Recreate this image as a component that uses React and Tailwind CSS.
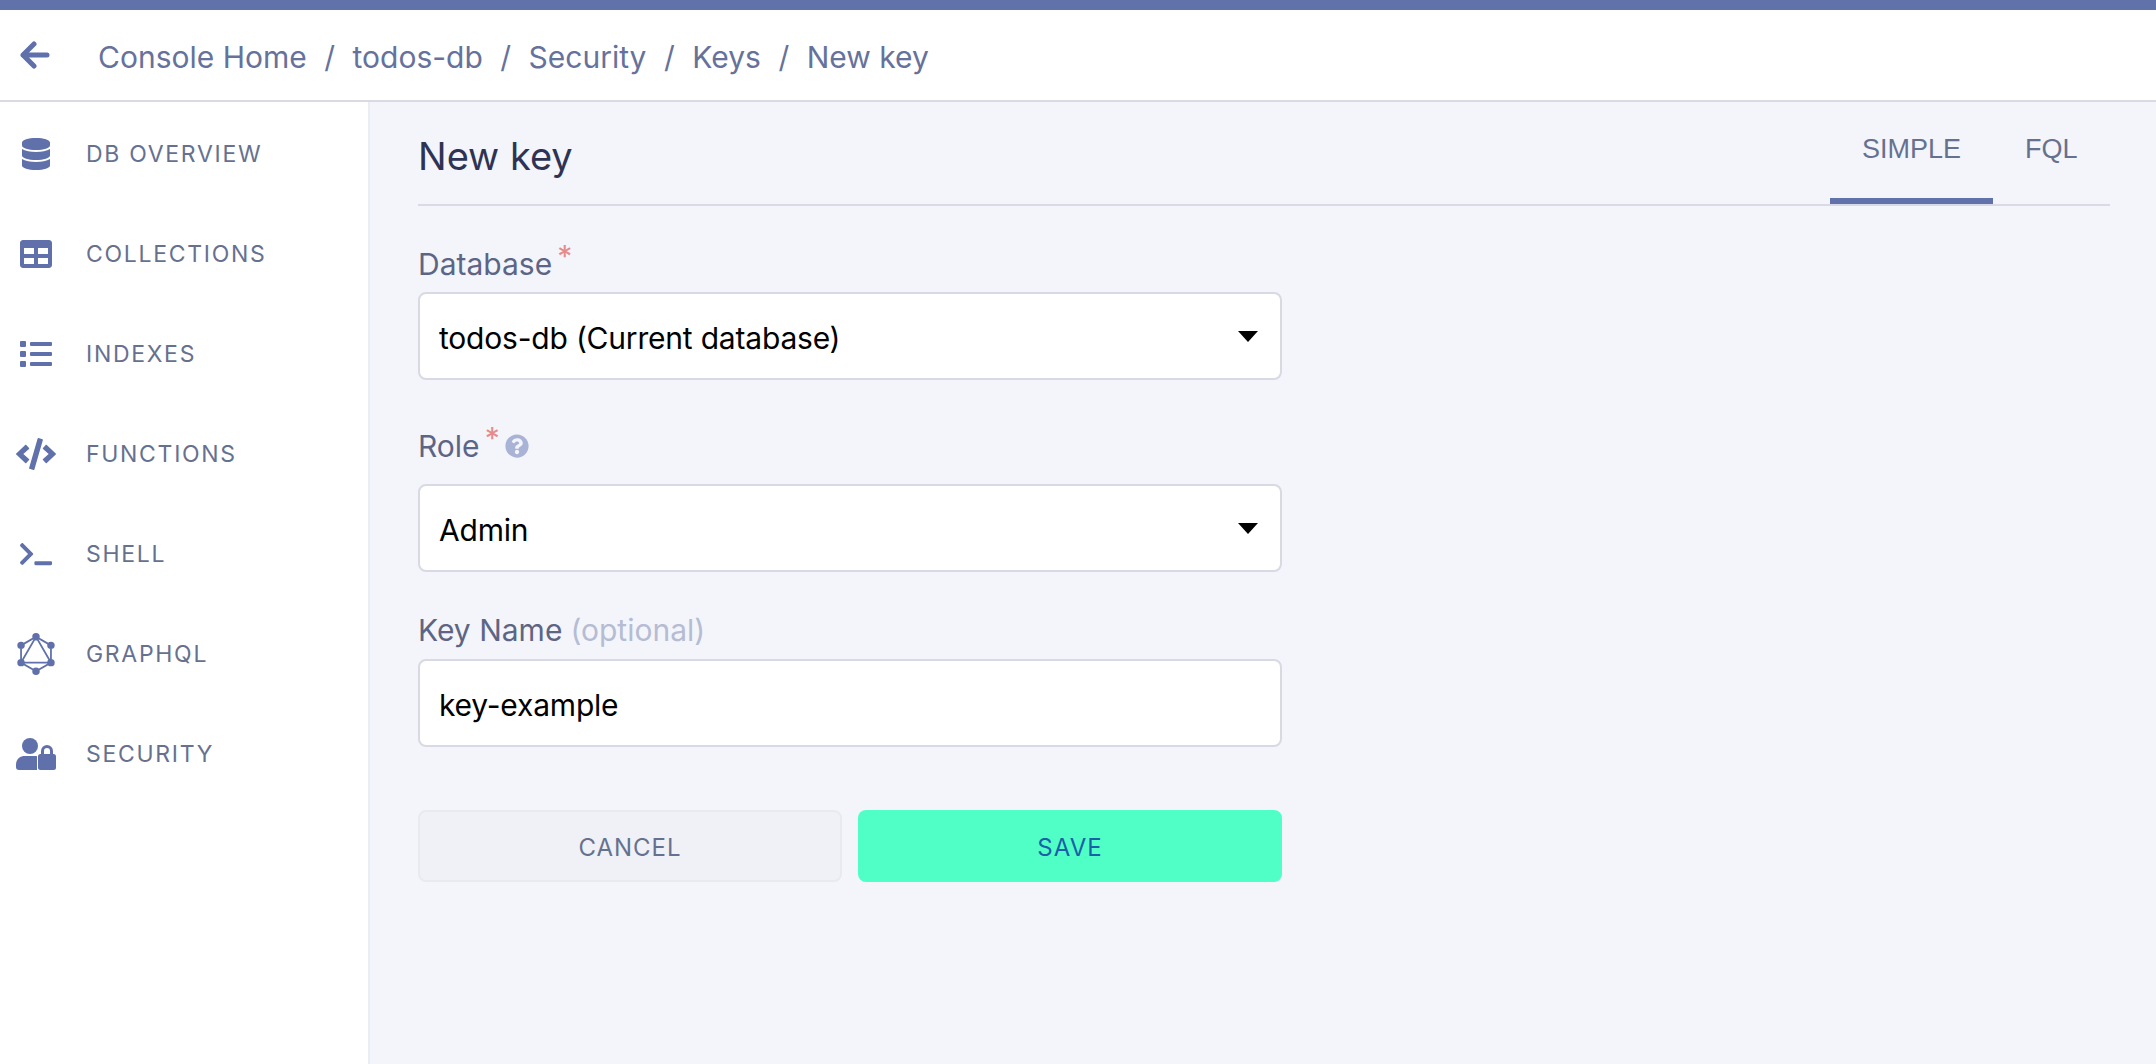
import React from "react";
import { FaDatabase, FaTable, FaList, FaCode, FaTerminal, FaQuestionCircle } from "react-icons/fa";
import { SiGraphql } from "react-icons/si";

function BackArrow() {
  return (
    <svg width="30" height="28" viewBox="0 0 30 28" fill="none" stroke="#5f70ab" strokeWidth="5" strokeLinecap="round" strokeLinejoin="round">
      <path d="M3 14H27M14 3L3 14L14 25" />
    </svg>
  );
}

function SecurityIcon() {
  return (
    <svg width="40" height="32" viewBox="0 0 40 32" fill="#5f70ab">
      <circle cx="14" cy="8" r="8" />
      <path d="M0 27c0-6 4-9 9-9h10c1 0 2 .2 2 .4V32H3c-2 0-3-1-3-3z" />
      <rect x="22" y="16" width="18" height="16" rx="2.5" />
      <path d="M25 17v-4a6 6 0 0 1 12 0v4h-3v-4a3 3 0 0 0-6 0v4z" />
    </svg>
  );
}

const nav = [
  ["DB OVERVIEW", <FaDatabase className="w-[28px] h-[32px]" />],
  ["COLLECTIONS", <FaTable className="w-[32px] h-[32px]" />],
  ["INDEXES", <FaList className="w-[32px] h-[32px]" />],
  ["FUNCTIONS", <FaCode className="w-[40px] h-[32px]" />],
  ["SHELL", <FaTerminal className="w-[32px] h-[28px]" />],
  ["GRAPHQL", <SiGraphql className="w-[42px] h-[44px]" />],
  ["SECURITY", <SecurityIcon />],
];

function Label({ children }) {
  return <div className="h-[40px] flex items-center text-[30px] leading-none text-[#5d6585]">{children}</div>;
}

function Caret() {
  return <div className="w-0 h-0 border-l-[10px] border-r-[10px] border-t-[11px] border-l-transparent border-r-transparent border-t-black" />;
}

function Field({ children, arrow }) {
  return (
    <div className="h-[88px] rounded-[8px] border-2 border-[#d8d9e3] bg-white flex items-center justify-between pl-[19px] pr-[22px] text-[30px] tracking-[-0.2px] text-black">
      <span className="pt-[4px]">{children}</span>
      {arrow && <Caret />}
    </div>
  );
}

export default function App() {
  return (
    <div className="w-[2156px] h-[1064px] flex flex-col bg-white overflow-hidden font-['Inter',sans-serif]">
      <div className="h-[10px] bg-[#6172ab] shrink-0" />
      <header className="h-[92px] shrink-0 bg-white border-b-2 border-[#d9dae3] flex items-center text-[#66729b]">
        <div className="w-[98px] pl-[20px]">
          <BackArrow />
        </div>
        <nav className="pt-[4px] flex items-center gap-[17.5px] text-[30px]">
          <span>Console Home</span><span>/</span>
          <span>todos-db</span><span>/</span>
          <span>Security</span><span>/</span>
          <span>Keys</span><span>/</span>
          <span>New key</span>
        </nav>
      </header>
      <div className="flex-1 flex min-h-0">
        <aside className="w-[370px] shrink-0 border-r-2 border-[#ebedf4] bg-white pt-[2px]">
          {nav.map(([label, icon]) => (
            <div key={label} className="h-[100px] flex items-center text-[#5f70ab]">
              <div className="w-[86px] pr-[14px] flex justify-center">{icon}</div>
              <span className="text-[23px] tracking-[1.7px] text-[#66718f]">{label}</span>
            </div>
          ))}
        </aside>
        <main className="flex-1 bg-[#f3f5fa] pl-[48px] pr-[46px]">
          <div className="h-[104px] border-b-2 border-[#d9dae6] flex justify-between">
            <h1 className="pt-[31px] text-[38px] leading-[46px] text-[#2e3355]">New key</h1>
            <div className="flex h-[104px] font-['Liberation_Sans',sans-serif] text-[27px] text-[#66718f]">
              <div className="w-[163px] h-[102px] pt-[27px] text-center border-b-[6px] border-[#6172ab]">SIMPLE</div>
              <div className="w-[117px] pl-[32px] pt-[27px]">FQL</div>
            </div>
          </div>
          <div className="w-[864px]">
            <div className="pt-[38px] pb-[8px]">
              <Label>Database<span className="relative -top-[8px] ml-[5px] text-[#e68a8a]">*</span></Label>
            </div>
            <Field arrow>todos-db (Current database)</Field>
            <div className="pt-[46px] pb-[18px]">
              <Label>Role<span className="relative -top-[8px] ml-[5px] text-[#e68a8a]">*</span><FaQuestionCircle className="ml-[5px] w-[24px] h-[24px] text-[#a9b3d6]" /></Label>
            </div>
            <Field arrow>Admin</Field>
            <div className="pt-[38px] pb-[9px]">
              <Label>Key Name<span className="ml-[8px] text-[#b5bcd3]">(optional)</span></Label>
            </div>
            <Field>key-example</Field>
            <div className="mt-[63px] grid grid-cols-2 gap-[16px]">
              <button className="h-[72px] pt-[3px] rounded-[8px] border-2 border-[#e8eaf1] bg-[#eff1f6] text-[24px] tracking-[1px] text-[#66718f]">CANCEL</button>
              <button className="h-[72px] pt-[3px] rounded-[8px] bg-[#50ffc5] text-[24px] tracking-[1px] text-[#1a5fa8]">SAVE</button>
            </div>
          </div>
        </main>
      </div>
    </div>
  );
}
